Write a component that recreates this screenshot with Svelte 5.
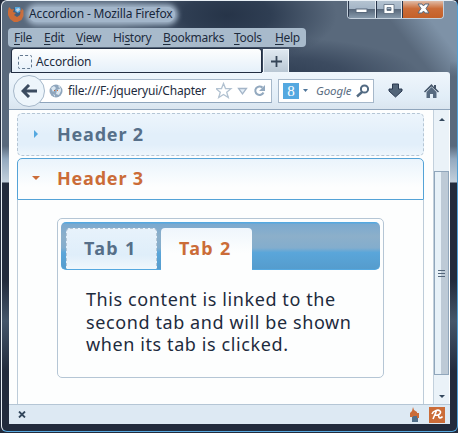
<script>
  const menus = [
    { label: 'File', w: 30 },
    { label: 'Edit', w: 32 },
    { label: 'View', w: 37 },
    { label: 'History', w: 50, key: 2 },
    { label: 'Bookmarks', w: 71 },
    { label: 'Tools', w: 41 },
    { label: 'Help', w: 31 }
  ];
  const lines = ['This content is linked to the', 'second tab and will be shown', 'when its tab is clicked.'];
</script>

<div class="window">
  <header class="titlebar">
    <svg class="fox" width="16" height="16" viewBox="0 0 16 16">
      <circle cx="8.500" cy="7.500" r="6" fill="#44607e" />
      <path d="M7 1h5l1 4-3 2-3-2z" fill="#54a8e0" />
      <path d="M8 3l3-1 1 2-3 2z" fill="#c5d2de" />
      <path d="M1 1l2.500 2.500L6 3 5 6l3 1-2 2 3 2 3-2 .5-3-1-2 2 .5V2l2 2.500V10l-2 4-4 2H6l-4-3-2-4V5z" fill="#cb6c38" />
    </svg>
    <span class="title">Accordion - Mozilla Firefox</span>
    <div class="controls">
      <span class="ctl min"><svg width="26" height="16"><rect x="7" y="8" width="11" height="3.500" fill="#fdfefe" stroke="#59697c" /></svg></span>
      <span class="ctl max"><svg width="24" height="16"><path d="M7 3.500h10v9H7zM10 6.500v3h4v-3z" fill="#fdfefe" fill-rule="evenodd" stroke="#59697c" stroke-width=".8" /></svg></span>
      <span class="ctl close"><svg width="42" height="16"><path d="M15 3h4l1.500 2L22 3h4l-3 4.500L26 12h-4l-1.500-2L19 12h-4l3-4.500z" fill="#fdfefe" stroke="#59697c" /></svg></span>
    </div>
  </header>

  <nav class="menubar">
    {#each menus as m}
      <span style="width:{m.w}px">{m.label.slice(0, m.key ?? 0)}<u>{m.label[m.key ?? 0]}</u>{m.label.slice((m.key ?? 0) + 1)}</span>
    {/each}
  </nav>

  <div class="tabstrip">
    <div class="pagetab"><i class="blank"></i><span>Accordion</span></div>
    <div class="newtab"><svg width="11" height="11"><path d="M5.500 0v11M0 5.500h11" stroke="#354557" stroke-width="1.800" /></svg></div>
  </div>

  <div class="toolbar">
    <div class="back"><svg width="16" height="14" viewBox="0 0 16 14"><path d="M8 1L2 7l6 6M2.500 7H16" fill="none" stroke="#3b4b60" stroke-width="3" /></svg></div>
    <div class="url">
      <svg class="globe" width="14" height="14"><circle cx="7" cy="7" r="6.500" fill="#8fa6bd" /><path d="M2 4l3-2 2 2-3 4zM8 6l4-2v3l-2 4-3-1zM4 10l2 1v2zM9 1l3 2-2 1z" fill="#dbe7f1" /><path d="M5 6h1v1H5zM8 6h1v1H8z" fill="#cb6c38" /></svg>
      <span>file:///F:/jqueryui/Chapter</span>
      <svg class="urlicons" width="52" height="18">
        <path d="M7.500 1.500l2 5 5.500.2-4.300 3.600 1.600 5.200-4.800-3-4.800 3 1.600-5.200L0 6.700l5.500-.2z" fill="#fff" stroke="#b2c2d1" stroke-width="1.300" />
        <path d="M22.500 6.500h8l-4 5.500z" fill="#e4eff8" stroke="#a4b5c8" stroke-width="1.300" />
        <path d="M46.500 5.500a4.300 4.300 0 1 0 1 5" fill="none" stroke="#93a9bf" stroke-width="2" /><path d="M49 3v6h-6z" fill="#93a9bf" />
      </svg>
    </div>
    <div class="search">
      <b>8</b><svg width="5" height="3"><path d="M0 0h5L2.500 3z" fill="#50769a" /></svg><em>Google</em>
      <svg class="lens" width="14" height="14"><circle cx="8.500" cy="5" r="3.600" fill="none" stroke="#536b83" stroke-width="2" /><path d="M6 8l-5 4.500" stroke="#536b83" stroke-width="2.400" /></svg>
    </div>
    <svg class="down" width="15" height="15"><path d="M4.500 1h6v5H14v2l-6.500 6L1 8V6h3.500z" fill="#526579" stroke="#293950" /></svg>
    <svg class="home" width="17" height="16"><path d="M8.500 1L1 8.500l1 1 6.500-6 6.500 6 1-1-3-3V2h-2v2z" fill="#45566a" /><path d="M3.500 9l5-5 5 5v6h-3.500v-4h-3v4H3.500z" fill="#566a80" /></svg>
  </div>

  <div class="viewport">
    <main>
      <h3 class="head idle"><i class="right"></i><span>Header 2</span></h3>
      <h3 class="head active"><i class="open"></i><span>Header 3</span></h3>
      <section class="panel">
        <div class="tabs">
          <div class="tabnav">
            <div class="tab t1"><span>Tab 1</span></div>
            <div class="tab t2"><span>Tab 2</span></div>
          </div>
          <p>{#each lines as l}<span>{l}</span>{/each}</p>
        </div>
      </section>
    </main>
    <aside class="scroll">
      <i class="up"></i>
      <div class="thumb"><i></i><i></i><i></i></div>
      <i class="dn"></i>
    </aside>
  </div>

  <footer>
    <svg width="8" height="7"><path d="M1 .5l6 6M7 .5l-6 6" stroke="#33475c" stroke-width="1.800" /></svg>
    <svg class="torch" width="10" height="16"><path d="M2 9h6v6H2z" fill="#52708a" /><path d="M3 0l1 3 3 2v1h2v5H7V9H3v1H0V6l2-2z" fill="#cb6c38" /></svg>
    <svg class="badge" width="16" height="16"><rect width="16" height="16" fill="#cb6c38" /><path d="M4 12L7.500 4M3 7c1-3 6-5 8-3s-2 5-4.500 4M10 8.500c-1 3 2 3 3.500 1" fill="none" stroke="#fff" stroke-width="1.600" /></svg>
  </footer>
</div>

<style>
  :global(body) { margin: 0; background: #222b3c; }
  .window, .window * { box-sizing: border-box; }
  .window {
    width: 457px; height: 432px; margin-left: 1px; padding: 0 7px 7px;
    border: 1px solid #e8eff5; border-right: 1px solid #4f9fd6; border-bottom-color: #58a9df; border-radius: 6px;
    font-family: "Noto Sans", "Open Sans", sans-serif; color: #1d2b3d; font-size: 12px;
    background:
      linear-gradient(transparent 60px, #59697c 76px 145px, #93a9bf 158px, #c3d0dc 181px, transparent 182px) left / 7px 100% no-repeat,
      linear-gradient(transparent 60px, #59697c 76px 145px, #93a9bf 158px, #c3d0dc 181px, transparent 182px) right / 7px 100% no-repeat,
      linear-gradient(52deg, transparent 84%, #7e92a7 92%) 0 0 / 100% 76px no-repeat,
      radial-gradient(ellipse 110px 50px at 225px 14px, #263448, #2f3e53 40%, transparent 100%) 0 0 / 100% 76px no-repeat,
      radial-gradient(ellipse 150px 40px at 270px 76px, #2f3e53, #3c4b60 50%, transparent 100%) 0 0 / 100% 76px no-repeat,
      linear-gradient(#59697c, #59697c) 0 0 / 100% 76px no-repeat,
      linear-gradient(#222b3c 280px, #45566a 320px, #222b3c 370px);
    overflow: hidden;
  }
  .titlebar { height: 27px; display: flex; align-items: flex-start; white-space: nowrap; }
  .fox { margin: 5px 5px 0 -1px; flex: none; }
  .title { margin-top: 6px; height: 15px; line-height: 14px; width: 146px; letter-spacing: -.15px; color: #17263a; background: #a3b6ca; border-radius: 8px; box-shadow: 0 0 5px 3px #a3b6ca; }
  .controls { margin: 0 6px 0 auto; display: flex; border: 1px solid #c4d0dc; border-top: 0; border-radius: 0 0 4px 4px; height: 18px; overflow: hidden; }
  .ctl { background: linear-gradient(#b4c3d1, #a4b5c6 45%, #59697c 50%, #8699ab); border-right: 1px solid #e0e8ef; border-left: 1px solid #28354a; }
  .ctl.close { width: 41px; background: linear-gradient(#e0bba6, #cb6c38 45%, #c46029); border-right: 0; }
  .ctl svg { display: block; }
  .menubar { margin-left: -1px; width: 298px; height: 19px; padding-left: 6px; background: #a8bacb; border-radius: 4px; display: flex; line-height: 19px; white-space: nowrap; letter-spacing: -.3px; }
  u { text-underline-offset: 2px; text-decoration-skip-ink: none; }
  .tabstrip { display: flex; height: 25px; padding: 2px 0 0 3px; gap: 2px; }
  .pagetab { width: 249px; background: linear-gradient(#fdfefe, #e5f0fa); display: flex; align-items: center; padding: 2px 0 0 6px; border-radius: 3px 3px 0 0; letter-spacing: -.1px; box-shadow: 0 0 0 1px #222e42; }
  .blank { width: 14px; height: 14px; border: 1px dashed #62788f; border-radius: 2px; margin-right: 4px; }
  .newtab { width: 26px; display: grid; place-items: center; background: linear-gradient(#dfe8f0, #b9c7d4); border: 1px solid #eff5fa; border-bottom: 0; }
  .toolbar { height: 38px; display: flex; align-items: center; padding-left: 4px; background: linear-gradient(#eff6fc, #e1edf7 70%, #dae5ef); border-bottom: 1px solid #8fa5bc; border-radius: 3px 3px 0 0; }
  .back { width: 32px; height: 32px; flex: none; border: 1px solid #a6b8ca; border-radius: 50%; background: #edf5fb; display: grid; place-items: center; z-index: 1; }
  .url { width: 233px; height: 24px; margin-left: -6px; padding-left: 9px; border: 1px solid #a6b8ca; border-bottom-color: #8fa5bc; background: #fff; display: flex; align-items: center; white-space: nowrap; flex: none; }
  .url span { margin-left: 5px; width: 138px; letter-spacing: -.2px; }
  .urlicons { margin-left: 10px; flex: none; }
  .search { width: 96px; height: 24px; flex: none; margin-left: 6px; border: 1px solid #a6b8ca; background: #fff; display: flex; align-items: center; padding-left: 4px; }
  .search b { width: 16px; height: 16px; background: #54a8e0; color: #fff; font: 15px/16px "Liberation Serif", serif; text-align: center; margin-right: 4px; }
  .search em { margin-left: 8px; width: 36px; color: #5a6d82; font-size: 11.500px; letter-spacing: -.1px; }
  .lens { margin-left: 4px; }
  .down { margin-left: 14px; flex: none; }
  .home { margin-left: 20px; flex: none; }
  .viewport { height: 294px; display: flex; background: #fdfefe; overflow: hidden; }
  main { width: 424px; padding: 3px 9px 0 8px; display: flex; flex-direction: column; }
  .head { margin: 0; height: 43px; flex: none; display: flex; align-items: center; font-size: 18px; font-weight: 700; border: 1px dashed #b5c6d5; border-radius: 5px; color: #566f89; letter-spacing: .8px; }
  .head span { width: 120px; white-space: nowrap; }
  .idle { background: linear-gradient(#edf5fc, #e2effa 50%, #e2effa 75%, #eef6fc); padding-bottom: 2px; }
  .active { margin-top: 2px; height: 42px; padding-bottom: 2px; border: 1px solid #54a3d7; border-radius: 5px 5px 0 0; color: #cb6c38; background: linear-gradient(#eaf4fc, #fdfefe 70%); }
  .right { border: 4px solid transparent; border-left-color: #54a8e0; border-right: 0; margin: 0 19px 0 16px; }
  .open { border: 4px solid transparent; border-top-color: #cb6c38; border-bottom: 0; margin: 0 17px 0 14px; }
  .panel { flex: 1; border: solid #bdccd9; border-width: 0 1px; padding: 18px 39px; }
  .tabs { width: 327px; height: 160px; border: 1px solid #b5c6d5; border-radius: 5px; padding: 3px; }
  .tabnav { height: 48px; display: flex; align-items: flex-end; padding-left: 5px; gap: 4px; border-radius: 5px; background: linear-gradient(#54a8e0 0 1px, #7ba9cf 2px, #8cafca 30%, #83adcd 55%, #5aa6da 65%, #559ccd); border: solid #54a8e0; border-width: 0 0 1px; }
  .tab { width: 91px; height: 41px; display: flex; align-items: center; padding: 0 0 2px 18px; border-radius: 4px 4px 0 0; font-size: 18px; font-weight: 700; letter-spacing: 1.300px; white-space: nowrap; }
  .t1 { background: linear-gradient(#e7f2fb, #dfeefa 65%, #f0f7fc); color: #566f89; border: 1px dashed #b5c6d5; border-bottom: 0; padding-left: 17px; }
  .t2 { background: linear-gradient(#eff6fc, #fdfefe 60%); color: #cb6c38; margin-bottom: -1px; height: 42px; }
  p { margin: 18px 0 0 25px; font-size: 18px; line-height: 22.500px; letter-spacing: .6px; }
  p span { display: block; white-space: nowrap; }
  .scroll { width: 16px; background: #eaf2f8; border-left: 1px solid #c2d0dc; display: flex; flex-direction: column; align-items: center; }
  .scroll > i { border: 3px solid transparent; }
  .up { border-bottom-color: #33475c !important; border-top: 0 !important; margin: 8px 0 50px; }
  .dn { border-top-color: #33475c !important; border-bottom: 0 !important; margin-top: 20px; }
  .thumb { width: 15px; height: 204px; border: 1px solid #90a6bb; background: linear-gradient(90deg, #e7f1f8 45%, #bdcad6 50%); display: flex; flex-direction: column; align-items: center; justify-content: center; gap: 2px; }
  .thumb i { width: 7px; height: 1px; background: #53667b; }
  footer { height: 20px; display: flex; align-items: center; padding-left: 9px; background: #dde9f3; border-top: 1px solid #b5c6d5; }
  .torch { margin-left: auto; }
  .badge { margin: 0 5px 0 9px; }
</style>
